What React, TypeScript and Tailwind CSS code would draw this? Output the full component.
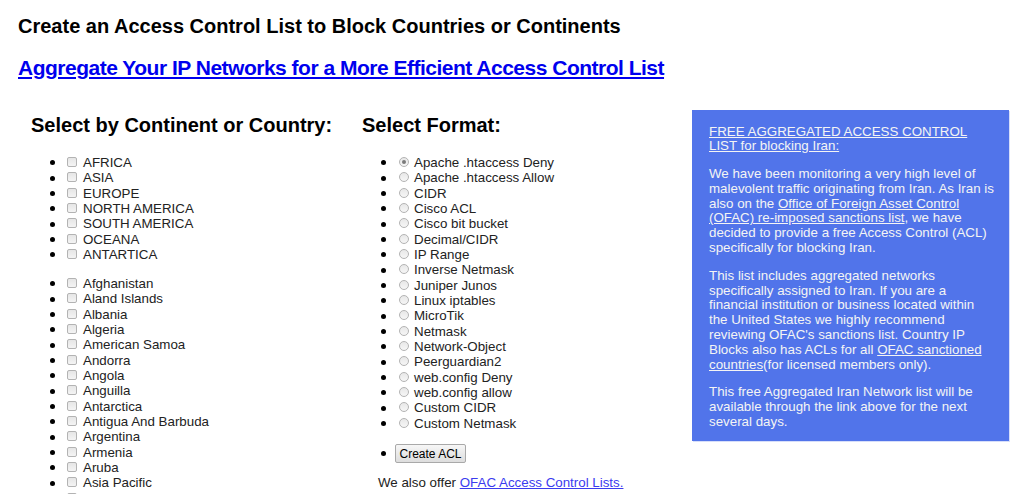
import React from 'react';

const CONTINENTS = ['AFRICA', 'ASIA', 'EUROPE', 'NORTH AMERICA', 'SOUTH AMERICA', 'OCEANA', 'ANTARTICA'];

const COUNTRIES = [
  'Afghanistan',
  'Aland Islands',
  'Albania',
  'Algeria',
  'American Samoa',
  'Andorra',
  'Angola',
  'Anguilla',
  'Antarctica',
  'Antigua And Barbuda',
  'Argentina',
  'Armenia',
  'Aruba',
  'Asia Pacific',
  'Australia',
  'Austria',
  'Azerbaijan',
];

const FORMATS = [
  'Apache .htaccess Deny',
  'Apache .htaccess Allow',
  'CIDR',
  'Cisco ACL',
  'Cisco bit bucket',
  'Decimal/CIDR',
  'IP Range',
  'Inverse Netmask',
  'Juniper Junos',
  'Linux iptables',
  'MicroTik',
  'Netmask',
  'Network-Object',
  'Peerguardian2',
  'web.config Deny',
  'web.config allow',
  'Custom CIDR',
  'Custom Netmask',
];

const Bullet = () => <span className="ml-[19px] w-[5px] h-[5px] rounded-full bg-black shrink-0" />;

const CheckItem = ({ label }: { label: string }) => (
  <li className="flex items-center h-[15.33px]">
    <Bullet />
    <span className="ml-[12px] mb-[2px] w-[10px] h-[10px] rounded-[2px] border border-[#b3b3b3] bg-gradient-to-b from-[#e6e6e6] to-[#f4f4f4] shrink-0" />
    <span className="ml-[6px] whitespace-nowrap">{label}</span>
  </li>
);

const RadioItem = ({ label, checked }: { label: string; checked?: boolean }) => (
  <li className="flex items-center h-[15.33px]">
    <Bullet />
    <span className="ml-[13px] mb-[2px] w-[10px] h-[10px] rounded-full border border-[#b3b3b3] bg-gradient-to-b from-[#e8e8e8] to-[#f6f6f6] flex items-center justify-center shrink-0">
      {checked && <span className="w-[4px] h-[4px] rounded-full bg-[#7a7a7a]" />}
    </span>
    <span className="ml-[5px] whitespace-nowrap">{label}</span>
  </li>
);

export default function App() {
  return (
    <div className="min-h-screen bg-white text-black font-['Liberation_Sans',Arial,sans-serif] pl-[18px] pb-6">
      <h1 className="pt-[14.5px] text-[20px] leading-[23px] font-bold">
        Create an Access Control List to Block Countries or Continents
      </h1>
      <a
        href="#aggregate"
        className="block w-max mt-[18.5px] text-[21px] leading-[24px] font-bold tracking-[-0.5px] text-[#0000ee] underline"
      >
        Aggregate Your IP Networks for a More Efficient Access Control List
      </a>

      <div className="mt-[30px] ml-[13px] grid grid-cols-[331px_330px_317px] items-start">
        {/* Continents / countries */}
        <div>
          <h2 className="mt-[3.5px] text-[20px] leading-[23px] font-bold">Select by Continent or Country:</h2>
          <ul className="mt-[18.8px] text-[13.33px] text-[#222]">
            {CONTINENTS.map((c) => (
              <CheckItem key={c} label={c} />
            ))}
          </ul>
          <ul className="mt-[13.67px] text-[13.33px] text-[#222]">
            {COUNTRIES.map((c) => (
              <CheckItem key={c} label={c} />
            ))}
          </ul>
        </div>

        {/* Formats */}
        <div>
          <h2 className="mt-[3.5px] text-[20px] leading-[23px] font-bold">Select Format:</h2>
          <ul className="mt-[18.8px] text-[13.33px] text-[#222]">
            {FORMATS.map((f, i) => (
              <RadioItem key={f} label={f} checked={i === 0} />
            ))}
            <li className="mt-[12px] h-[21px] flex items-center">
              <Bullet />
              <button
                type="button"
                className="ml-[9px] w-[71px] h-[19px] rounded-[2px] border border-[#a9a9a9] bg-gradient-to-b from-[#f7f7f7] to-[#dddddd] text-[12px] text-black leading-none"
              >
                Create ACL
              </button>
            </li>
          </ul>
          <p className="mt-[11px] ml-[16px] text-[13.33px] leading-[15.33px] text-[#222] whitespace-nowrap">
            We also offer{' '}
            <a href="#ofac" className="text-[#3b3bef] underline">
              OFAC Access Control Lists.
            </a>
          </p>
        </div>

        {/* Iran notice */}
        <div className="bg-[#5174ea] shadow-[1px_1px_0_#d6defa] text-[#f4f4f4] text-[13.33px] leading-[14.8px] pl-[17px] pr-[13px] pt-[14.5px] pb-[11px]">
          <p>
            <a href="#iran" className="underline">
              FREE AGGREGATED ACCESS CONTROL LIST for blocking Iran:
            </a>
          </p>
          <p className="mt-[13px]">
            We have been monitoring a very high level of malevolent traffic originating from Iran. As Iran is also on
            the{' '}
            <a href="#ofac-list" className="underline">
              Office of Foreign Asset Control (OFAC) re-imposed sanctions list
            </a>
            , we have decided to provide a free Access Control (ACL) specifically for blocking Iran.
          </p>
          <p className="mt-[13px]">
            This list includes aggregated networks specifically assigned to Iran. If you are a financial institution or
            business located within the United States we highly recommend reviewing OFAC's sanctions list. Country IP
            Blocks also has ACLs for all{' '}
            <a href="#ofac-countries" className="underline">
              OFAC sanctioned countries
            </a>
            (for licensed members only).
          </p>
          <p className="mt-[13px]">
            This free Aggregated Iran Network list will be available through the link above for the next several days.
          </p>
        </div>
      </div>
    </div>
  );
}
